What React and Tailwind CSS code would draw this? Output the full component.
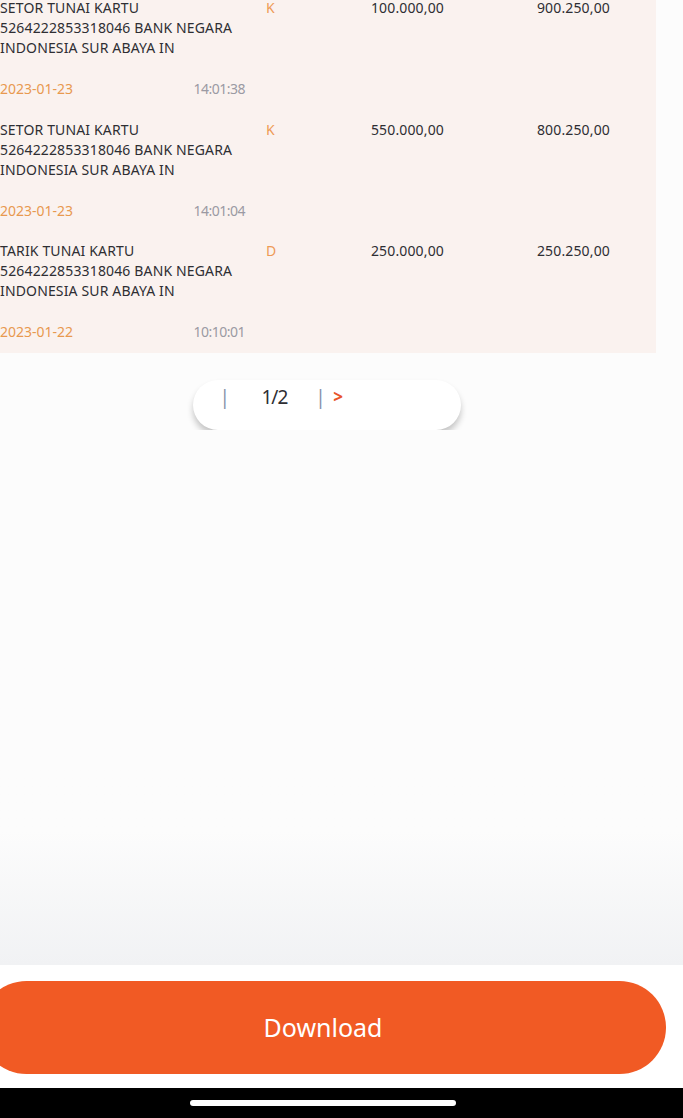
import React from 'react';

const rows = [
    { lines: ['SETOR TUNAI KARTU', '5264222853318046 BANK NEGARA', 'INDONESIA SUR ABAYA IN'], type: 'K', amount: '100.000,00', balance: '900.250,00', date: '2023-01-23', time: '14:01:38' },
    { lines: ['SETOR TUNAI KARTU', '5264222853318046 BANK NEGARA', 'INDONESIA SUR ABAYA IN'], type: 'K', amount: '550.000,00', balance: '800.250,00', date: '2023-01-23', time: '14:01:04' },
    { lines: ['TARIK TUNAI KARTU', '5264222853318046 BANK NEGARA', 'INDONESIA SUR ABAYA IN'], type: 'D', amount: '250.000,00', balance: '250.250,00', date: '2023-01-22', time: '10:10:01' },
];

const font = { fontFamily: '"Noto Sans", "Open Sans", sans-serif' };

const App = () => {
    return (
        <div className="w-[683px] h-[1118px] flex flex-col overflow-hidden bg-[#fcfcfc]" style={font}>
            {/* Mutation table */}
            <div className="w-[656px] h-[353px] bg-[#faf2ef] shrink-0 overflow-hidden">
                <div className="flex flex-col -mt-[2px]">
                    {rows.map((row, i) => (
                        <div key={i} className="h-[121.5px] shrink-0 flex flex-col text-[14px] leading-[20px] tracking-[0.15px]">
                            <div className="flex">
                                <div className="w-[266px] text-[#2e2e33]">
                                    {row.lines.map((l) => (
                                        <div key={l}>{l}</div>
                                    ))}
                                </div>
                                <div className="w-[40px] text-[#ee9a56]">{row.type}</div>
                                <div className="w-[138px] text-right text-[#2e2e33]">{row.amount}</div>
                                <div className="w-[166px] text-right text-[#2e2e33]">{row.balance}</div>
                            </div>
                            <div className="flex w-[245px] justify-between mt-[21px] tracking-normal">
                                <span className="text-[#e8994f]">{row.date}</span>
                                <span className="text-[#9b9aa3] tracking-[-0.5px]">{row.time}</span>
                            </div>
                        </div>
                    ))}
                </div>
            </div>

            {/* Pagination */}
            <div className="flex justify-center mt-[27px] pr-[30px] shrink-0">
                <div className="w-[268px] h-[50px] bg-white rounded-full shadow-[0_5px_6px_rgba(0,0,0,0.22)] flex items-start pt-[4px] pl-[27px]">
                    <span className="w-[6px] text-[#8592ab] text-[19px] leading-[26px]">|</span>
                    <span className="ml-[36px] text-[#2e2e33] text-[19px] leading-[26px] tracking-[-1px]">1/2</span>
                    <span className="ml-[28px] w-[6px] text-[#8592ab] text-[19px] leading-[26px]">|</span>
                    <span className="ml-[12px] text-[#e8552a] text-[17px] font-bold leading-[26px]">&gt;</span>
                </div>
            </div>

            <div className="flex-1 bg-gradient-to-b from-[#fcfcfc] from-75% to-[#f1f2f4]" />

            {/* Download bar */}
            <div className="h-[123px] bg-white shrink-0 flex items-start pt-[16px]">
                <button className="-ml-[20px] w-[686px] h-[93px] rounded-full bg-[#f15a24] text-white text-[25px]" style={font}>
                    Download
                </button>
            </div>

            {/* System nav */}
            <div className="h-[30px] bg-black shrink-0 flex justify-center pt-[12px] pr-[37px]">
                <div className="w-[266px] h-[6px] rounded-full bg-white" />
            </div>
        </div>
    );
};

export default App;
